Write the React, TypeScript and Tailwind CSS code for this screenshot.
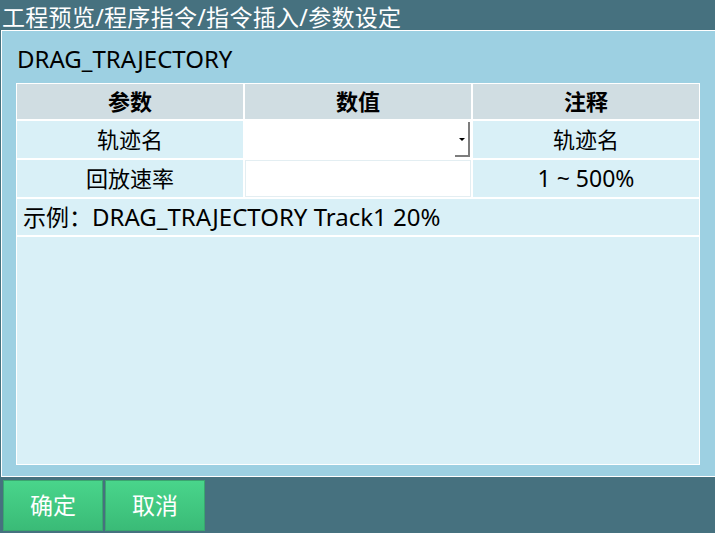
import React from "react";

const font = { fontFamily: '"Noto Sans", "Noto Sans CJK SC", sans-serif' };

const App = () => {
  return (
    <div
      className="w-[715px] h-[533px] bg-[#46717f] flex flex-col overflow-hidden text-black"
      style={font}
    >
      {/* Breadcrumb */}
      <div className="h-[30px] pl-[2px] text-[23px] tracking-[0.3px] leading-[34px] text-white whitespace-nowrap">
        工程预览/程序指令/指令插入/参数设定
      </div>

      {/* Main panel */}
      <div className="ml-[1px] h-[447px] border-t border-l border-b border-white bg-[#9dd0e2] pl-[14px] flex flex-col">
        <div className="h-[52px] pl-[1px] text-[24px] leading-[56px]">DRAG_TRAJECTORY</div>

        <div className="w-[684px] h-[382px] bg-white p-[1px] flex flex-col gap-[2px]">
          <div className="grid grid-cols-3 gap-[2px] h-[35px]">
            {["参数", "数值", "注释"].map((h) => (
              <div
                key={h}
                className="bg-[#d0dde2] flex items-center justify-center text-[22px] font-bold"
              >
                {h}
              </div>
            ))}
          </div>

          <div className="grid grid-cols-3 gap-[2px] h-[37px]">
            <div className="bg-[#d9f0f7] flex items-center justify-center text-[22px]">轨迹名</div>
            <div className="bg-white relative">
              <div className="absolute right-[1px] top-[1px] bottom-[1px] w-[15px] border-r-2 border-b-2 border-[#7d7d7d] flex items-center justify-center">
                <div className="w-0 h-0 border-l-[3px] border-r-[3px] border-t-[3px] border-l-transparent border-r-transparent border-t-black mt-[2px]" />
              </div>
            </div>
            <div className="bg-[#d9f0f7] flex items-center justify-center text-[22px]">轨迹名</div>
          </div>

          <div className="grid grid-cols-3 gap-[2px] h-[37px]">
            <div className="bg-[#d9f0f7] flex items-center justify-center text-[22px]">回放速率</div>
            <div className="bg-white border border-[#e3eef2]" />
            <div className="bg-[#d9f0f7] flex items-center justify-center text-[23px]">1 ~ 500%</div>
          </div>

          <div className="h-[36px] bg-[#d9f0f7] pl-[6px] flex items-center text-[23px] whitespace-nowrap">
            示例：<span className="text-[24px]">DRAG_TRAJECTORY Track1 20%</span>
          </div>

          <div className="flex-1 bg-[#d9f0f7]" />
        </div>
      </div>

      {/* Bottom buttons */}
      <div className="flex gap-[2px] pl-[3px] pt-[3px]">
        {["确定", "取消"].map((b) => (
          <button
            key={b}
            className="w-[100px] h-[51px] bg-gradient-to-b from-[#49d58b] to-[#3abb77] border border-[#3aa66f] text-white text-[23px] flex items-center justify-center"
          >
            {b}
          </button>
        ))}
      </div>
    </div>
  );
};

export default App;
